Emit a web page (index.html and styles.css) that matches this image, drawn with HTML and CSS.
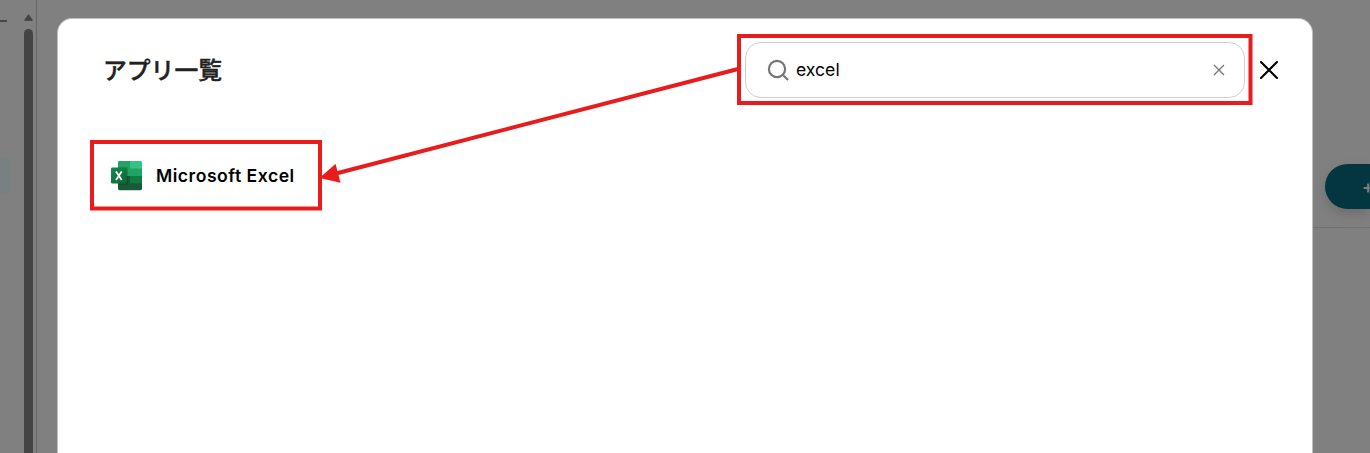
FILE: index.html
```
<!DOCTYPE html>
<html lang="ja">

<head>
  <meta charset="UTF-8">
  <meta name="viewport" content="width=device-width, initial-scale=1.0">
  <title>アプリ一覧</title>
  <link rel="stylesheet" href="styles.css">
</head>

<body>
  <div class="page">
    <aside class="sidebar">
      <div class="menu">
        <div class="menu-line"></div>
        <div class="menu-active"></div>
      </div>
      <div class="scrollbar">
        <svg class="scroll-up" width="9" height="8" viewBox="0 0 9 8"><path d="M4.5 0.7 L8.4 6.3 H0.6 Z" fill="#444" stroke="#444" stroke-linejoin="round"/></svg>
        <div class="scroll-thumb"></div>
      </div>
    </aside>
    <main class="content">
      <div class="toolbar">
        <button class="add-button">+</button>
      </div>
    </main>
  </div>

  <div class="modal">
    <div class="modal-header">
      <h1 class="modal-title">アプリ一覧</h1>
      <div class="search">
        <svg width="24" height="24" viewBox="0 0 24 24" fill="none" stroke="#757575" stroke-width="2.2">
          <circle cx="11" cy="11" r="8.1"/>
          <path d="M16.5 16.5 L22 22"/>
        </svg>
        <span class="search-text">excel</span>
        <svg width="12" height="12" viewBox="0 0 12 12" stroke="#757575" stroke-width="1.3"><path d="M1 1 L11 11 M11 1 L1 11"/></svg>
      </div>
      <svg class="close" width="20" height="20" viewBox="0 0 20 20" stroke="#000" stroke-width="2.1" stroke-linecap="round"><path d="M2 2 L18 18 M18 2 L2 18"/></svg>
    </div>

    <div class="app">
      <svg width="32" height="30" viewBox="0 0 32 30">
        <defs>
          <linearGradient id="tile" x1="0" y1="0" x2="1" y2="1">
            <stop offset="0" stop-color="#18884f"/>
            <stop offset="1" stop-color="#0b6631"/>
          </linearGradient>
          <clipPath id="sheet"><rect x="8" y="0" width="24" height="29.2" rx="1.4"/></clipPath>
        </defs>
        <g clip-path="url(#sheet)">
          <rect x="7" y="0" width="13" height="15" fill="#21a366"/>
          <rect x="20" y="0" width="13" height="8" fill="#33c481"/>
          <rect x="20" y="7.5" width="13" height="8" fill="#21a366"/>
          <rect x="7" y="15" width="13" height="15" fill="#185c37"/>
          <rect x="20" y="15" width="13" height="8" fill="#107c41"/>
          <rect x="20" y="22.3" width="13" height="8" fill="#185c37"/>
          <rect x="7" y="6.5" width="11" height="18" fill="#000" opacity="0.14"/>
        </g>
        <rect x="1" y="6.6" width="15.8" height="16" rx="1.4" fill="url(#tile)"/>
        <path d="M6 10.4 L11.7 19 M11.7 10.4 L6 19" stroke="#fff" stroke-width="1.8"/>
      </svg>
      <span class="app-name">Microsoft Excel</span>
    </div>
  </div>

  <!-- 説明用の赤枠と矢印 -->
  <svg class="guide" width="1370" height="453" viewBox="0 0 1370 453" fill="none" stroke="#e81c1c" stroke-width="4">
    <rect x="739" y="36" width="511.5" height="67"/>
    <rect x="92" y="142" width="228" height="66.5"/>
    <path d="M738 69 L336 173.5"/>
    <path d="M319.5 178 L335.5 163.7 L340.5 182.8 Z" fill="#e81c1c" stroke="none"/>
  </svg>
</body>

</html>
```
FILE: styles.css
```
body {
  margin: 0;
  height: 453px;
  position: relative;
  overflow: hidden;
  background-color: #808080;
  font-family: Inter, "Noto Sans CJK JP", sans-serif;
}

.page {
  display: flex;
  height: 453px;
}

.sidebar {
  display: flex;
  justify-content: space-between;
  box-sizing: border-box;
  width: 37px;
  padding-right: 3px;
  border-right: 1px solid #666;
}

.menu {
  width: 11px;
  padding-top: 20px;
}

.menu-line {
  width: 7px;
  height: 2px;
  background-color: #484848;
}

.menu-active {
  height: 38px;
  margin-top: 135px;
  border-radius: 0 10px 10px 0;
  background-color: #798082;
}

.scrollbar {
  display: flex;
  flex-direction: column;
  width: 9px;
  padding-top: 14px;
}

.scroll-thumb {
  flex: 1;
  margin-top: 7px;
  border-radius: 5px 5px 0 0;
  background-color: #444;
}

.content {
  flex: 1;
  padding-left: 24px;
}

.toolbar {
  display: flex;
  justify-content: flex-end;
  box-sizing: border-box;
  height: 228px;
  padding-top: 164px;
  border-bottom: 1px solid #707070;
}

.add-button {
  width: 45px;
  height: 45px;
  padding: 0 0 0 37px;
  border: none;
  border-radius: 23px 0 0 23px;
  background-color: #033641;
  box-shadow: 0 5px 12px rgba(0, 0, 0, 0.15);
  color: #808080;
  font-family: Inter, sans-serif;
  font-size: 18px;
  font-weight: 600;
  text-align: left;
  overflow: hidden;
}

.modal {
  position: absolute;
  top: 18px;
  left: 57px;
  box-sizing: border-box;
  width: 1256px;
  height: 435px;
  padding: 23px 33px 0 45px;
  border: 1px solid #bfbfbf;
  border-bottom: none;
  border-radius: 15px 15px 0 0;
  background-color: #fff;
}

.modal-header {
  display: flex;
  align-items: center;
}

.modal-title {
  flex: 1;
  margin: 0;
  padding-top: 1px;
  color: #222;
  font-size: 23.8px;
  font-weight: 500;
  line-height: 36px;
  -webkit-text-stroke: 0.4px #222;
}

.search {
  display: flex;
  align-items: center;
  box-sizing: border-box;
  width: 500px;
  height: 56px;
  padding: 0 19px 0 20px;
  border: 1px solid #d0d0d0;
  border-radius: 16px;
}

.search-text {
  flex: 1;
  margin-left: 6px;
  padding-bottom: 1px;
  font-size: 17.6px;
}

.close {
  margin-left: 14px;
}

.app {
  display: flex;
  align-items: center;
  height: 30px;
  margin: 63px 0 0 7px;
}

.app-name {
  margin-left: 14px;
  padding-bottom: 1px;
  font-size: 17.6px;
  font-weight: 600;
  letter-spacing: 0.5px;
}

.guide {
  position: absolute;
  top: 0;
  left: 0;
}
```
